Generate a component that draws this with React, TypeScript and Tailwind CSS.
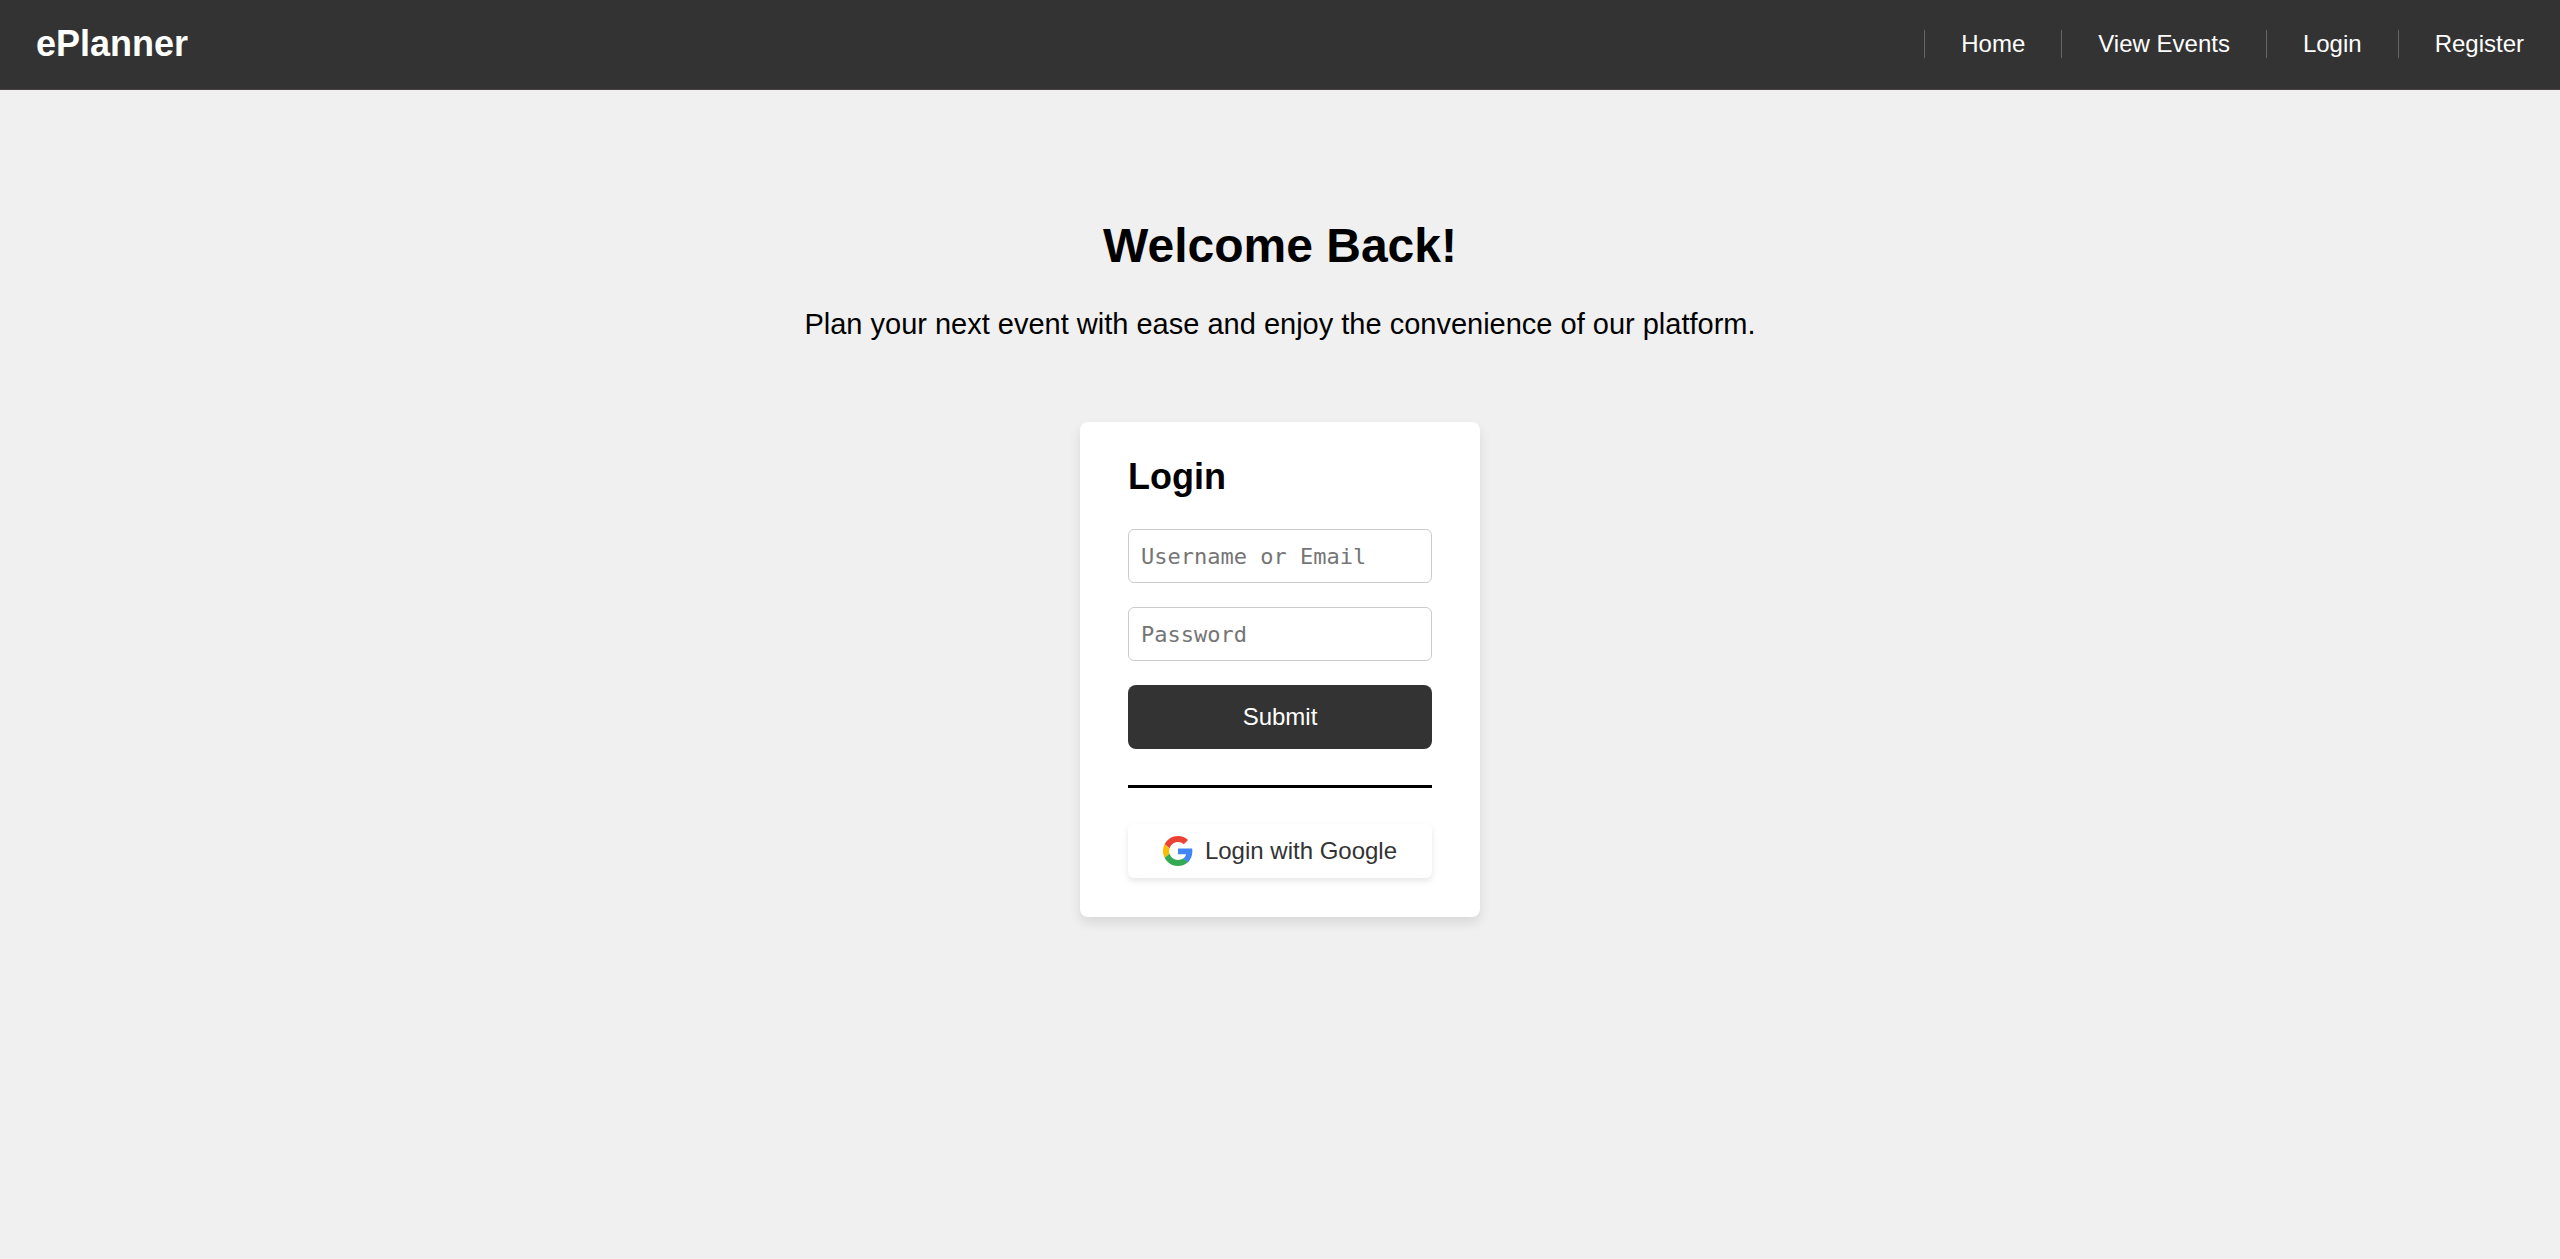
const navLinks = ['Home', 'View Events', 'Login', 'Register'];

function GoogleIcon() {
  return (
    <svg viewBox="0 0 48 48" className="size-[30px] shrink-0" aria-hidden="true">
      <path fill="#EA4335" d="M24 9.5c3.54 0 6.71 1.22 9.21 3.6l6.85-6.85C35.9 2.38 30.47 0 24 0 14.62 0 6.51 5.38 2.56 13.22l7.98 6.19C12.43 13.72 17.74 9.5 24 9.5z" />
      <path fill="#4285F4" d="M46.98 24.55c0-1.57-.15-3.09-.38-4.55H24v9.02h12.94c-.58 2.96-2.26 5.48-4.78 7.18l7.73 6c4.51-4.18 7.09-10.36 7.09-17.65z" />
      <path fill="#FBBC05" d="M10.53 28.59c-.48-1.45-.76-2.99-.76-4.59s.27-3.14.76-4.59l-7.98-6.19C.92 16.46 0 20.12 0 24c0 3.88.92 7.54 2.56 10.78l7.97-6.19z" />
      <path fill="#34A853" d="M24 48c6.48 0 11.93-2.13 15.89-5.81l-7.73-6c-2.15 1.45-4.92 2.3-8.16 2.3-6.26 0-11.57-4.22-13.47-9.91l-7.98 6.19C6.51 42.62 14.62 48 24 48z" />
    </svg>
  );
}

const inputClass =
  'block h-[54px] w-full rounded-md border border-[#ccc] bg-white px-3 font-["DejaVu_Sans_Mono",monospace] text-[22px] text-black placeholder:text-[#757575]';

export default function App() {
  return (
    <div className="min-h-screen bg-[#f0f0f0] font-['Liberation_Sans',Arial,sans-serif] text-2xl leading-7 text-black">
      <header className="flex h-[90px] items-center justify-between border-b border-[#4a444a] bg-[#333] pb-0.5 text-white">
        <a href="#" className="px-9 text-4xl leading-10 font-bold">ePlanner</a>
        <nav className="flex">
          {navLinks.map((label) => (
            <a key={label} href="#" className="border-l border-[#666] px-9">
              {label}
            </a>
          ))}
        </nav>
      </header>
      <main className="flex flex-col items-center pt-32">
        <h1 className="text-5xl leading-14 font-bold">Welcome Back!</h1>
        <p className="mt-8 text-[29px] leading-9">
          Plan your next event with ease and enjoy the convenience of our platform.
        </p>
        <section className="mt-20 w-[400px] rounded-lg bg-white px-12 pt-[35px] pb-[39px] shadow-[0_6px_12px_rgba(0,0,0,0.1)]">
          <h2 className="text-4xl leading-10 font-bold">Login</h2>
          <form className="mt-8 flex flex-col gap-6" onSubmit={(e) => e.preventDefault()}>
            <input type="text" aria-label="Username or Email" placeholder="Username or Email" className={inputClass} />
            <input type="password" aria-label="Password" placeholder="Password" className={inputClass} />
            <button type="submit" className="h-16 w-full rounded-lg bg-[#333] text-white">
              Submit
            </button>
          </form>
          <hr className="my-9 border-t-3 border-black" />
          <button
            type="button"
            className="flex h-[54px] w-full items-center justify-center gap-3 rounded-md bg-white text-[#333] shadow-[0_3px_6px_rgba(0,0,0,0.1)]"
          >
            <GoogleIcon />
            Login with Google
          </button>
        </section>
      </main>
    </div>
  );
}
